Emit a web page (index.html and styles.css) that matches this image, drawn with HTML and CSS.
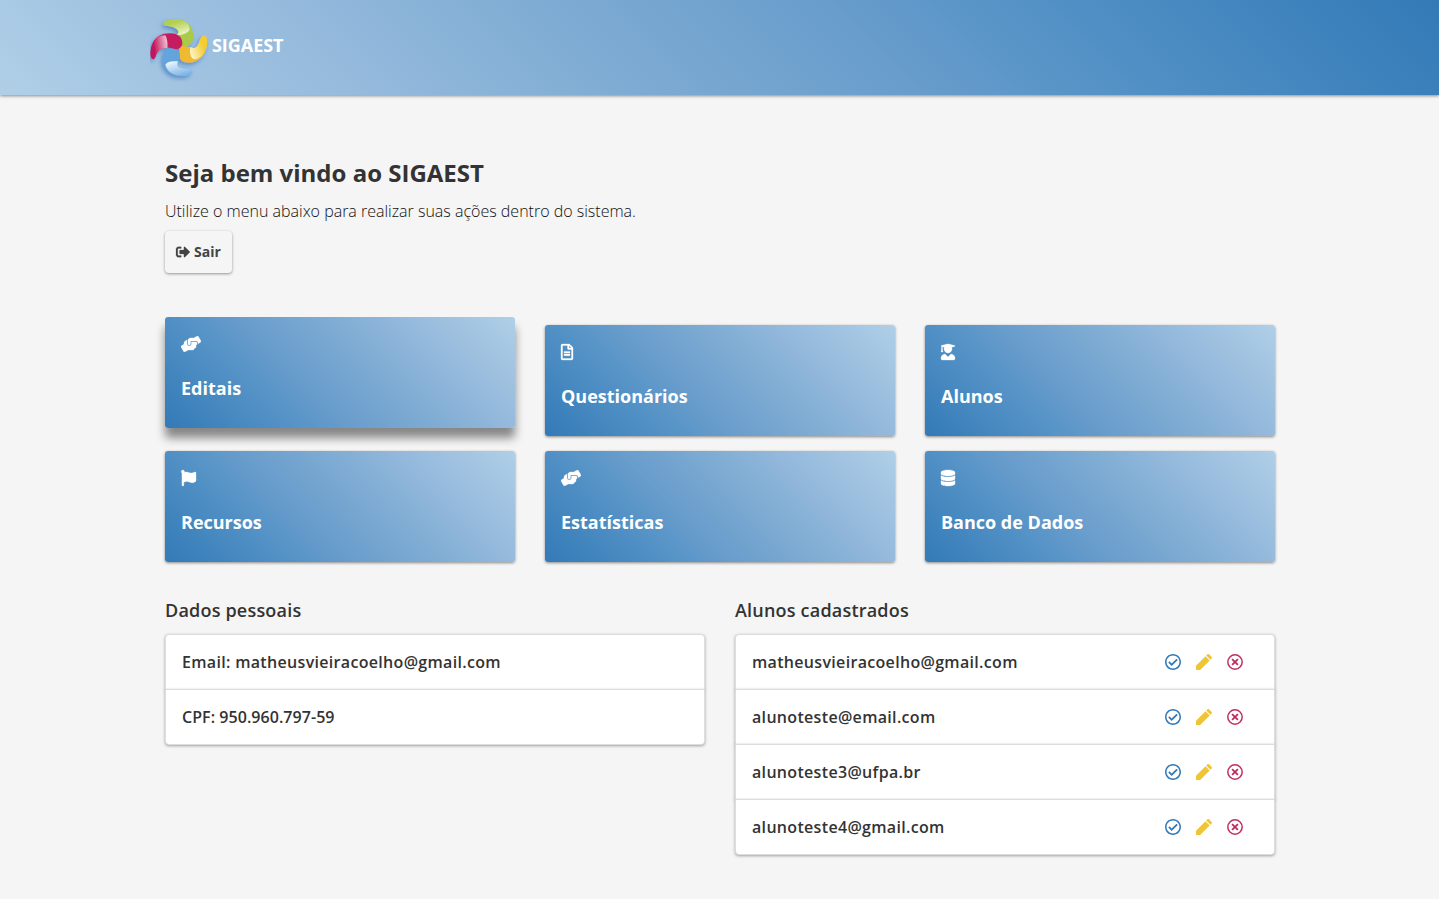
FILE: index.html
```html
<!DOCTYPE html>
<html lang="pt-BR">
<head>
<meta charset="utf-8">
<title>SIGAEST</title>
<link rel="stylesheet" href="styles.css">
</head>
<body>
<svg class="defs" width="0" height="0">
  <symbol id="hands" viewBox="0 0 640 512"><path d="M488 192H336v56c0 39.7-32.3 72-72 72s-72-32.3-72-72V126.4l-64.9 39C107.8 176.9 96 197.8 96 220.2v47.3l-80 46.2C.7 322.5-4.6 342.1 4.3 357.4l80 138.6c8.8 15.3 28.4 20.5 43.7 11.7L231.4 448H368c35.3 0 64-28.7 64-64h16c17.7 0 32-14.3 32-32v-64h8c13.3 0 24-10.7 24-24v-48c0-13.3-10.7-24-24-24zm147.7-37.4L555.7 16C546.9.7 527.3-4.5 512 4.3L408.6 64H306.4c-12 0-23.7 3.4-33.9 9.7L239 94.6c-9.4 5.8-15 16.1-15 27.1V248c0 22.1 17.9 40 40 40s40-17.9 40-40v-88h184c30.9 0 56 25.1 56 56v28.5l80-46.2c15.3-8.9 20.5-28.4 11.7-43.7z"/></symbol>
  <symbol id="check" viewBox="8 8 496 496"><path d="M256 8C119.033 8 8 119.033 8 256s111.033 248 248 248 248-111.033 248-248S392.967 8 256 8zm0 48c110.532 0 200 89.451 200 200 0 110.532-89.451 200-200 200-110.532 0-200-89.451-200-200 0-110.532 89.451-200 200-200m140.204 130.267l-22.536-22.718c-4.667-4.705-12.265-4.736-16.97-.068L215.346 303.697l-59.792-60.277c-4.667-4.705-12.265-4.736-16.97-.069l-22.719 22.536c-4.705 4.667-4.736 12.265-.068 16.971l90.781 91.516c4.667 4.705 12.265 4.736 16.97.068l172.589-171.204c4.704-4.668 4.734-12.266.067-16.971z"/></symbol>
  <symbol id="pencil" viewBox="3 3 18 18"><path d="M3 16.300V21h4.700L18.400 10.300l-4.700-4.700L3 16.300zM20.600 8.100c.5-.5.5-1.300 0-1.800L17.700 3.400c-.5-.5-1.300-.5-1.800 0L14.500 4.800l4.700 4.700 1.400-1.400z"/></symbol>
  <symbol id="times" viewBox="0 0 16 16"><circle cx="8" cy="8" r="7.200" fill="none" stroke="currentColor" stroke-width="1.500"/><path d="M5.100 5.100l5.800 5.800M10.900 5.100l-5.800 5.800" fill="none" stroke="currentColor" stroke-width="1.900"/></symbol>
</svg>

<header class="topbar">
  <div class="container brand">
    <svg class="logo" width="60" height="64" viewBox="30 30 180 192">
      <defs>
        <linearGradient id="lg" x1=".2" y1="0" x2=".7" y2="1"><stop offset=".25" stop-color="#b4cf4f"/><stop offset="1" stop-color="#eef5cf"/></linearGradient>
        <linearGradient id="lr" x1="0" y1=".5" x2="1" y2=".3"><stop offset=".2" stop-color="#c2185b"/><stop offset="1" stop-color="#f0c4d6"/></linearGradient>
        <linearGradient id="ly" x1="1" y1=".2" x2="0" y2=".7"><stop offset=".3" stop-color="#f3cd33"/><stop offset="1" stop-color="#fdf3c8"/></linearGradient>
        <linearGradient id="lb" x1=".8" y1="1" x2=".3" y2="0"><stop offset=".1" stop-color="#7db5e6"/><stop offset="1" stop-color="#ecf6fd"/></linearGradient>
        <filter id="sh" x="-20%" y="-20%" width="140%" height="140%"><feDropShadow dx="-5" dy="7" stdDeviation="6" flood-color="#2f6cb5" flood-opacity=".6"/></filter>
      </defs>
      <g filter="url(#sh)">
        <path d="M71 48C71 38 90 33 112 34C143 36 160 58 160 84C160 104 148 116 131 118L108 82C126 70 105 54 80 54Q71 53 71 48Z" fill="#a9cb49"/>
        <path d="M71 48C71 38 90 33 112 34C133 35 148 47 149 62C149 75 127 80 110 82C126 70 105 54 80 54Q71 53 71 48Z" fill="url(#lg)"/>
        <path d="M190 83C198 80 203 93 201 107C198 144 174 164 146 164C130 164 119 158 119 145C119 132 116 120 122 113L153 118C169 128 176 108 180 95Q184 84 190 83Z" fill="#efb932"/>
        <path d="M190 83C198 80 203 93 201 107C199 132 184 153 162 154C151 150 148 132 151 117C169 128 176 108 180 95Q184 84 190 83Z" fill="url(#ly)"/>
        <path d="M38 153C29 149 30 125 37 108C47 84 68 75 92 76C114 77 127 88 127 104C127 116 118 124 107 124L86 119C65 116 52 128 46 147Q43 155 38 153Z" fill="#c51c5f"/>
        <path d="M38 153C29 149 30 125 37 108C44 91 58 82 76 82C81 91 84 105 82 121C64 116 52 128 46 147Q43 155 38 153Z" fill="url(#lr)"/>
        <path d="M155 184C159 192 153 200 138 203C105 208 78 196 70 168C65 146 69 128 83 123C100 118 120 126 120 143C120 154 113 160 108 163C106 177 120 184 145 181Q153 180 155 184Z" fill="#64a4dc"/>
        <path d="M155 184C159 192 153 200 138 203C108 207 82 195 76 170C84 158 98 159 114 160C106 177 120 184 145 181Q153 180 155 184Z" fill="url(#lb)"/>
      </g>
    </svg>
    <span class="brand-name">SIGAEST</span>
  </div>
</header>

<main class="container">
  <section class="welcome">
    <h1>Seja bem vindo ao SIGAEST</h1>
    <p>Utilize o menu abaixo para realizar suas ações dentro do sistema.</p>
    <button class="exit"><svg width="14" height="14" viewBox="0 0 512 512"><path d="M497 273L329 441c-15 15-41 4.500-41-17v-96H152c-13.300 0-24-10.700-24-24v-96c0-13.300 10.700-24 24-24h136V88c0-21.400 25.900-32 41-17l168 168c9.300 9.400 9.300 24.600 0 34zM192 436v-40c0-6.600-5.400-12-12-12H96c-17.700 0-32-14.300-32-32V160c0-17.700 14.300-32 32-32h84c6.600 0 12-5.400 12-12V76c0-6.600-5.400-12-12-12H96c-53 0-96 43-96 96v192c0 53 43 96 96 96h84c6.600 0 12-5.400 12-12z"/></svg>Sair</button>
  </section>

  <nav class="menu">
    <a class="card raised"><svg width="20" height="16"><use href="#hands"/></svg><span>Editais</span></a>
    <a class="card"><svg class="doc" width="12" height="16" viewBox="0 0 384 512"><path d="M288 248v28c0 6.600-5.400 12-12 12H108c-6.600 0-12-5.400-12-12v-28c0-6.600 5.400-12 12-12h168c6.600 0 12 5.400 12 12zm-12 72H108c-6.600 0-12 5.400-12 12v28c0 6.600 5.400 12 12 12h168c6.600 0 12-5.400 12-12v-28c0-6.600-5.400-12-12-12zm108-188.100V464c0 26.500-21.500 48-48 48H48c-26.500 0-48-21.500-48-48V48C0 21.500 21.500 0 48 0h204.100C264.800 0 277 5.100 286 14.100L369.900 98c9 8.900 14.100 21.200 14.100 33.900zm-128-80V128h76.100L256 51.900zM336 464V176H232c-13.300 0-24-10.700-24-24V48H48v416h288z"/></svg><span>Questionários</span></a>
    <a class="card"><svg width="14" height="16" viewBox="0 0 448 512"><path d="M319.400 320.600L224 416l-95.400-95.400C57.100 323.700 0 382.200 0 454.400v9.600c0 26.500 21.500 48 48 48h352c26.500 0 48-21.500 48-48v-9.600c0-72.200-57.100-130.700-128.600-133.800zM13.600 79.800l6.400 1.500v58.400c-7 4.200-12 11.500-12 20.300 0 8.400 4.600 15.400 11.100 19.700L3.500 242c-1.700 6.900 2.100 14 7.600 14h41.800c5.500 0 9.300-7.100 7.600-14l-15.600-62.300C51.400 175.400 56 168.400 56 160c0-8.800-5-16.100-12-20.300V87.100l66 15.900c-8.600 17.200-14 36.400-14 57 0 70.700 57.300 128 128 128s128-57.300 128-128c0-20.600-5.300-39.800-14-57l96.300-23.200c18.200-4.400 18.200-27.100 0-31.500l-190.400-46c-13-3.100-26.700-3.100-39.700 0L13.600 48.200c-18.100 4.400-18.100 27.200 0 31.600z"/></svg><span>Alunos</span></a>
    <a class="card"><svg width="15" height="16" viewBox="0 0 512 512" preserveAspectRatio="none"><path d="M349.565 98.783C295.978 98.783 251.721 64 184.348 64c-24.955 0-47.309 4.384-68.045 12.013a55.947 55.947 0 0 0 3.586-23.562C118.117 24.015 94.806 1.206 66.338.048 34.345-1.254 8 24.296 8 56c0 19.026 9.497 35.825 24 45.945V488c0 13.255 10.745 24 24 24h16c13.255 0 24-10.745 24-24v-94.400c28.311-12.064 63.582-22.122 114.435-22.122 53.588 0 97.844 34.783 165.217 34.783 48.169 0 86.667-16.294 122.505-40.858C506.840 359.452 512 349.571 512 339.045v-243.100c0-23.393-24.269-38.870-45.485-29.016-34.338 15.948-76.454 31.854-116.950 31.854z"/></svg><span>Recursos</span></a>
    <a class="card"><svg width="20" height="16"><use href="#hands"/></svg><span>Estatísticas</span></a>
    <a class="card"><svg width="14" height="16" viewBox="0 0 448 512"><path d="M448 73.143v45.714C448 159.143 347.667 192 224 192S0 159.143 0 118.857V73.143C0 32.857 100.333 0 224 0s224 32.857 224 73.143zM448 176v102.857C448 319.143 347.667 352 224 352S0 319.143 0 278.857V176c48.125 33.143 136.208 48.572 224 48.572S399.874 209.143 448 176zm0 160v102.857C448 479.143 347.667 512 224 512S0 479.143 0 438.857V336c48.125 33.143 136.208 48.572 224 48.572S399.874 369.143 448 336z"/></svg><span>Banco de Dados</span></a>
  </nav>

  <div class="panels">
    <section>
      <h2>Dados pessoais</h2>
      <ul class="list">
        <li>Email: matheusvieiracoelho@gmail.com</li>
        <li class="numeric">CPF: 950.960.797-59</li>
      </ul>
    </section>
    <section>
      <h2>Alunos cadastrados</h2>
      <ul class="list">
        <li>matheusvieiracoelho@gmail.com<span class="actions"><svg class="ok"><use href="#check"/></svg><svg class="edit"><use href="#pencil"/></svg><svg class="del"><use href="#times"/></svg></span></li>
        <li>alunoteste@email.com<span class="actions"><svg class="ok"><use href="#check"/></svg><svg class="edit"><use href="#pencil"/></svg><svg class="del"><use href="#times"/></svg></span></li>
        <li>alunoteste3@ufpa.br<span class="actions"><svg class="ok"><use href="#check"/></svg><svg class="edit"><use href="#pencil"/></svg><svg class="del"><use href="#times"/></svg></span></li>
        <li>alunoteste4@gmail.com<span class="actions"><svg class="ok"><use href="#check"/></svg><svg class="edit"><use href="#pencil"/></svg><svg class="del"><use href="#times"/></svg></span></li>
      </ul>
    </section>
  </div>
</main>
</body>
</html>
```
FILE: styles.css
```css
* { box-sizing: border-box; }
body {
  margin: 0;
  padding-bottom: 30px;
  background: #f5f5f5;
  color: #333;
  font-family: "Open Sans", sans-serif;
  font-size: 16px;
  line-height: 24px;
}
.defs { display: block; }
svg { fill: currentColor; flex: none; }
.container { width: 1140px; margin: 0 0 0 150px; }
.topbar {
  height: 95px;
  background: linear-gradient(45deg, #b0cfe7, #94b9dc 25%, #7caad2 43%, #6c9fcd 57%, #5190c5 75%, #337ab7);
  box-shadow: 0 1px 3px rgba(0, 0, 0, .45);
}
.brand { display: flex; align-items: flex-start; padding-top: 18px; }
.brand-name {
  margin: 15px 0 0 2px;
  color: #fff;
  font-size: 18px;
  font-weight: 700;
  letter-spacing: -.05px;
}
.welcome { padding: 65px 15px 0; }
h1 { margin: 0; font-size: 24px; font-weight: 700; line-height: 26px; }
.welcome p { margin: 13px 0 8px; color: #111; font-weight: 300; }
.exit {
  display: flex;
  align-items: center;
  gap: 4px;
  height: 42px;
  padding: 0 11px 2px;
  border: 0;
  border-radius: 4px;
  background: #f5f5f5;
  box-shadow: 0 1px 3px rgba(0, 0, 0, .4);
  color: #444;
  font: 700 14px "Open Sans", sans-serif;
}
.exit svg { margin-top: 1px; stroke: currentColor; stroke-width: 8px; overflow: visible; }
.menu {
  display: grid;
  grid-template-columns: repeat(3, 350px);
  gap: 15px 30px;
  padding: 52px 15px 0;
}
.card {
  display: flex;
  flex-direction: column;
  gap: 24px;
  height: 111px;
  padding: 19px 16px 0;
  border-radius: 3px;
  background: linear-gradient(45deg, #337ab7, #5190c5 25%, #6c9fcd 43%, #7caad2 57%, #94b9dc 75%, #b0cfe7);
  box-shadow: 0 1px 3px rgba(0, 0, 0, .45);
  color: #fff;
  font-size: 18px;
  font-weight: 700;
}
.card svg { stroke: currentColor; stroke-width: 10px; overflow: visible; }
.raised {
  transform: translateY(-8px);
  box-shadow: 0 10px 10px rgba(0, 0, 0, .45);
}
.panels {
  display: grid;
  grid-template-columns: 540px 540px;
  gap: 30px;
  padding: 36px 15px 0;
}
h2 {
  margin: 0 0 12px;
  font-size: 18px;
  font-weight: 640;
  line-height: 24px;
  letter-spacing: .2px;
}
.list { margin: 0; padding: 0; list-style: none; }
.list li {
  display: flex;
  align-items: center;
  justify-content: space-between;
  height: 56px;
  margin-bottom: -1px;
  padding: 0 31px 0 16px;
  border: 1px solid #ddd;
  background: #fff;
  box-shadow: 0 1px 3px rgba(0, 0, 0, .35);
  font-weight: 600;
  letter-spacing: .32px;
}
.list .numeric { letter-spacing: .05px; }
.list li:first-child { border-radius: 4px 4px 0 0; }
.list li:last-child { margin-bottom: 0; border-radius: 0 0 4px 4px; }
.actions { display: flex; gap: 15px; }
.actions svg { width: 16px; height: 16px; }
.ok { color: #337ab7; }
.edit { color: #f0c535; }
.del { color: #c0305f; }
```
